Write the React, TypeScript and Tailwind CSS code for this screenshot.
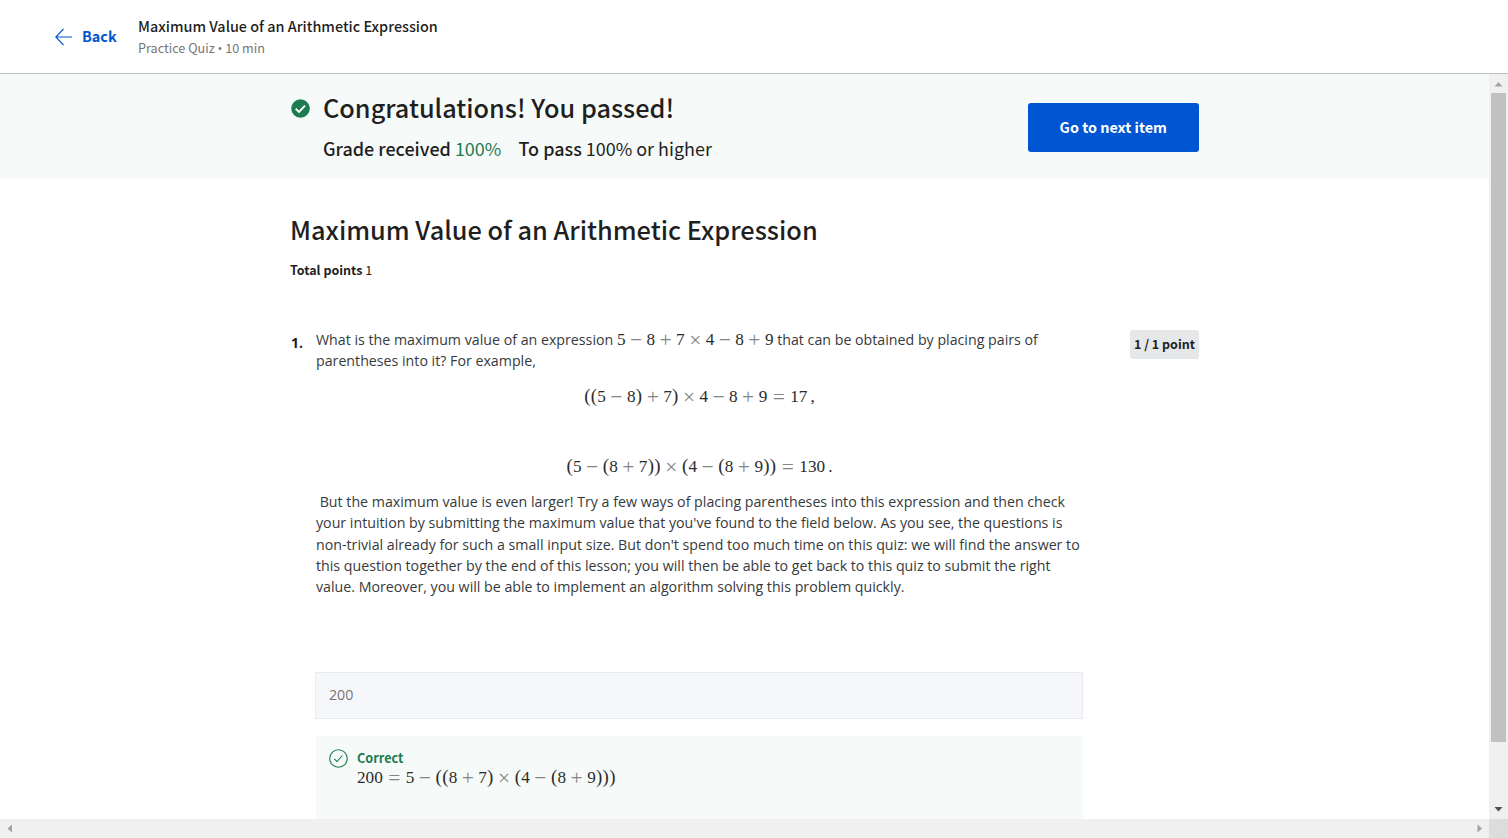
import React from "react";

const SANS = "font-['Noto_Sans_CJK_SC','Noto_Sans_CJK_JP',sans-serif]";
const BODY = "font-['Open_Sans',sans-serif]";

/** Typesets a short arithmetic formula with TeX-like advances. */
function Formula({ children }: { children: string }) {
  return (
    <span className="whitespace-nowrap font-['Liberation_Serif',serif] text-[17.2px] leading-none text-[#2c2c2c]">
      {[...children].map((c, i) => {
        if (c === " ") return <span key={i} className="inline-block w-[0.167em]" />;
        if ("−+×".includes(c))
          return (
            <span key={i} className="mx-[0.222em] inline-flex w-[0.778em] justify-center text-[#858585]">
              <span className="relative top-[2px] text-[1.25em] leading-[0.8]">{c}</span>
            </span>
          );
        if (c === "=")
          return (
            <span key={i} className="mx-[0.278em] inline-flex w-[0.778em] justify-center text-[#858585]">
              <span className="relative top-[2px] text-[1.25em] leading-[0.8]">=</span>
            </span>
          );
        if ("()".includes(c))
          return (
            <span key={i} className="inline-flex w-[0.389em] justify-center">
              <span className="text-[1.1em] leading-[0.8]">{c}</span>
            </span>
          );
        return (
          <span key={i} className={/\d/.test(c) ? "inline-block w-[0.5em]" : "inline-block w-[0.278em]"}>
            {c}
          </span>
        );
      })}
    </span>
  );
}

function Header() {
  return (
    <header className="flex h-[74px] shrink-0 border-b border-[#bdbdbd] bg-white pl-[55px]">
      <a className="mt-[27px] flex h-5 w-[83px] items-center text-[#0056d2]">
        <svg className="-mt-px" width="17" height="18" viewBox="0 0 17 18" fill="none" stroke="currentColor" strokeWidth="1.1">
          <path d="M8.5 1 0.8 9l7.7 8M0.8 9H17" />
        </svg>
        <span className="-mt-[2px] ml-[10px] text-[14.4px] leading-5 font-bold">Back</span>
      </a>
      <div className="pt-[16px]">
        <div className="h-[22px] text-[14.4px] leading-[20px] font-medium whitespace-nowrap">
          Maximum Value of an Arithmetic Expression
        </div>
        <div className="h-5 text-[12.65px] leading-5 whitespace-nowrap text-[#757575]">
          Practice Quiz <span className="font-['Open_Sans',sans-serif] text-[12.6px]">•</span> 10 min
        </div>
      </div>
    </header>
  );
}

function Banner() {
  return (
    <section className="flex h-[105px] shrink-0 bg-[#f6fbf9] pl-[291px]">
      <svg className="mt-[25px]" width="19" height="19" viewBox="0 0 19 19">
        <circle cx="9.5" cy="9.5" r="9.3" fill="#1d7c50" />
        <path d="M4.7 9.8 8 12.9l6-6.3" fill="none" stroke="#fff" strokeWidth="1.9" />
      </svg>
      <div className="ml-[13px] w-[705px]">
        <h1 className="mt-[15px] h-9 text-[25.28px] leading-9 font-medium whitespace-nowrap">
          Congratulations! You passed!
        </h1>
        <p className="mt-[10px] flex h-[27px] text-[17.97px] leading-[27px] whitespace-nowrap">
          <span className="w-[195.5px]">
            <span className="font-medium">Grade received</span> <span className="text-[#1d7c50]">100%</span>
          </span>
          <span>
            <span className="font-medium">To pass</span> 100% or higher
          </span>
        </p>
      </div>
      <button className="mt-[29px] -ml-[0.5px] h-[49px] w-[171.5px] rounded-[3px] bg-[#0056d2] pb-[2px] text-[14.4px] leading-[47px] font-bold text-white">
        Go to next item
      </button>
    </section>
  );
}

const answerLines = [
  "\u00a0But the maximum value is even larger! Try a few ways of placing parentheses into this expression and then check",
  "your intuition by submitting the maximum value that you've found to the field below. As you see, the questions is",
  "non-trivial already for such a small input size. But don't spend too much time on this quiz: we will find the answer to",
  "this question together by the end of this lesson; you will then be able to get back to this quiz to submit the right",
  "value. Moreover, you will be able to implement an algorithm solving this problem quickly.",
];

function Question() {
  return (
    <section className="flex">
      <div className="w-[25px] pt-[3px] text-[14px] leading-[21px] font-bold">
        <span className="font-['Open_Sans',sans-serif]">1.</span>
      </div>
      <div className={`w-[767px] text-[14.21px] text-[#373a3c] ${BODY}`}>
        <p className="h-[21px] leading-[21.6px] whitespace-nowrap">
          What is the maximum value of an expression <Formula>5−8+7×4−8+9</Formula> that can be obtained by placing
          pairs of
        </p>
        <p className="h-[22px] leading-[21.6px]">parentheses into it? For example,</p>
        <div className="mt-[14px] h-[22px] text-center leading-[22px]">
          <Formula>((5−8)+7)×4−8+9=17 ,</Formula>
        </div>
        <div className="mt-[48px] h-[22px] text-center leading-[22px]">
          <Formula>(5−(8+7))×(4−(8+9))=130 .</Formula>
        </div>
        <div className="mt-[12.6px] leading-[21.45px] whitespace-nowrap">
          {answerLines.map((line) => (
            <p key={line}>{line}</p>
          ))}
        </div>
        <div className="mt-[74.4px] -ml-px h-[47px] border border-[#e8eaec] bg-[#f5f7fa] pl-[13px] text-[14.2px] leading-[44px] text-[#757575]">
          200
        </div>
        <div className="mt-[17px] flex h-[120px] bg-[#f6fbf9] pt-[13px] pl-[13px]">
          <svg width="19" height="19" viewBox="0 0 19 19" fill="none" stroke="#1d7c50" strokeWidth="1.1">
            <circle cx="9.5" cy="9.5" r="8.8" />
            <path d="M5.2 9.8l2.8 2.7 5.4-6" />
          </svg>
          <div className="-mt-px ml-[9px]">
            <div className={`h-5 text-[12.7px] leading-5 font-bold text-[#1d7c50] ${SANS}`}>Correct</div>
            <div className="-mt-px h-[22px] leading-[22px]">
              <Formula>200=5−((8+7)×(4−(8+9)))</Formula>
            </div>
          </div>
        </div>
      </div>
      <div className="mt-[1px] ml-[47px] h-[29px] w-[69px] rounded-[3px] bg-[#e5e7e8] text-center text-[12.5px] leading-[28px] font-bold whitespace-nowrap">
        1 / 1 point
      </div>
    </section>
  );
}

function VerticalScrollbar() {
  return (
    <div className="flex w-[19px] shrink-0 flex-col items-center bg-[#f0f0f0]">
      <svg width="19" height="19" viewBox="0 0 19 19">
        <path d="M5.5 12.5h8l-4-4.5z" fill="#a3a3a3" />
      </svg>
      <div className="h-[649px] w-[15px] bg-[#c1c1c1]" />
      <svg className="mt-auto" width="19" height="19" viewBox="0 0 19 19">
        <path d="M5.5 7h8l-4 4.5z" fill="#505050" />
      </svg>
    </div>
  );
}

function HorizontalScrollbar() {
  return (
    <div className="flex h-[19px] shrink-0 bg-[#f0f0f0]">
      <svg width="19" height="19" viewBox="0 0 19 19">
        <path d="M12 5.5v8l-4.5-4z" fill="#a3a3a3" />
      </svg>
      <svg className="ml-auto" width="19" height="19" viewBox="0 0 19 19">
        <path d="M7.5 5.5v8l4.5-4z" fill="#a3a3a3" />
      </svg>
      <div className="w-[19px] bg-[#dcdcdc]" />
    </div>
  );
}

export default function App() {
  return (
    <div className={`flex h-[838px] w-[1508px] flex-col overflow-hidden bg-white text-[#1f1f1f] ${SANS}`}>
      <Header />
      <div className="flex min-h-0 flex-1">
        <main className="min-w-0 flex-1 overflow-hidden">
          <Banner />
          <div className="pt-[32px] pl-[291px]">
            <h2 className="-ml-px h-9 text-[25.33px] leading-9 font-medium whitespace-nowrap">
              Maximum Value of an Arithmetic Expression
            </h2>
            <p className="mt-[13px] mb-[49px] -ml-px h-5 text-[12.5px] leading-5">
              <span className="font-bold">Total points</span> 1
            </p>
            <Question />
          </div>
        </main>
        <VerticalScrollbar />
      </div>
      <HorizontalScrollbar />
    </div>
  );
}
